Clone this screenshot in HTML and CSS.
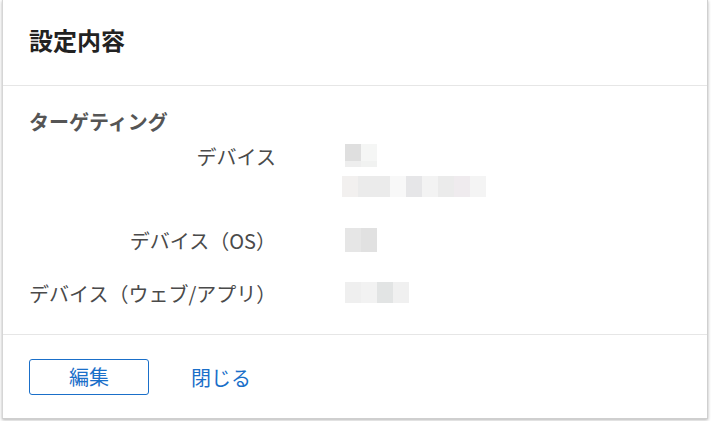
FILE: index.html
```html
<!DOCTYPE html>
<html lang="ja">
<head>
<meta charset="utf-8">
<link rel="stylesheet" href="styles.css">
</head>
<body>
<div class="page">
  <div class="dialog">
    <div class="dlg-header"><h1 class="dlg-title">設定内容</h1></div>
    <div class="dlg-body">
      <h2 class="section-title">ターゲティング</h2>
      <div class="settings">
        <div class="label">デバイス</div>
        <div class="value">
          <div class="line"><span class="blk b1"><i class="c1"></i><i class="c2"></i></span></div>
          <div class="line"><span class="blk b2"><i class="d1"></i><i class="d2 w2"></i><i class="d3"></i><i class="d4"></i><i class="d5"></i><i class="d6"></i><i class="d7"></i><i class="d8"></i></span></div>
        </div>
        <div class="label">デバイス（OS）</div>
        <div class="value">
          <div class="line"><span class="blk b3"><i class="e1"></i><i class="e2"></i></span></div>
        </div>
        <div class="label">デバイス（ウェブ/アプリ）</div>
        <div class="value">
          <div class="line"><span class="blk b4"><i class="f1"></i><i class="f2"></i><i class="f3"></i><i class="f4"></i></span></div>
        </div>
      </div>
    </div>
    <div class="dlg-footer">
      <button class="btn-edit" type="button">編集</button>
      <a class="link-close" href="#">閉じる</a>
    </div>
  </div>
</div>
</body>
</html>
```

FILE: styles.css
```css
html, body {
  margin: 0;
  padding: 0;
  background: #ffffff;
}
body {
  font-family: "Noto Sans CJK JP", "Noto Sans", sans-serif;
  color: #444;
  width: 712px;
  height: 421px;
  overflow: hidden;
}
.page {
  padding-left: 2px;
}
.dialog {
  width: 706px;
  height: 419px;
  box-sizing: border-box;
  background: #fff;
  border-left: 1px solid #d6d6d6;
  border-right: 1px solid #d0d0d0;
  border-bottom: 1px solid #cfcfcf;
  box-shadow: 0 1px 3px rgba(0,0,0,0.3);
  display: flex;
  flex-direction: column;
}
.dlg-header {
  height: 86px;
  border-bottom: 1px solid #e6e6e6;
  box-sizing: border-box;
  display: flex;
  align-items: center;
  padding: 0 0 5px 26px;
}
.dlg-title {
  margin: 0;
  font-size: 24px;
  line-height: 30px;
  font-weight: bold;
  color: #222;
}
.dlg-body {
  padding: 23px 0 26px 26px;
  border-bottom: 1px solid #e6e6e6;
}
.section-title {
  margin: 0 0 5px;
  font-size: 20px;
  line-height: 26px;
  font-weight: bold;
  color: #555;
}
.settings {
  display: grid;
  grid-template-columns: 247px 1fr;
  column-gap: 69px;
  row-gap: 22px;
}
.label {
  text-align: right;
  font-size: 20px;
  line-height: 28px;
  padding-top: 3px;
  color: #4a4a4a;
  white-space: nowrap;
}
.value {
  display: flex;
  flex-direction: column;
}
.line {
  height: 31px;
  display: flex;
  align-items: center;
}
.blk {
  display: flex;
}
.blk i {
  display: block;
  width: 16px;
}
.blk i.w2 { width: 32px; }
.b1 { height: 23px; margin-left: 0; }
.b1 i.c1 { background: linear-gradient(#dfdfdf 0 74%, #eeeeee 74%); }
.b1 i.c2 { background: linear-gradient(#f5f6f5 0 74%, #f1f2f1 74%); }
.b2 { height: 21px; margin-left: -3px; }
.b2 .d1 { background: #f2f0ef; }
.b2 .d2 { background: #ebebeb; }
.b2 .d3 { background: #f8f8f8; }
.b2 .d4 { background: #e6e6e8; }
.b2 .d5 { background: #f3f3f3; }
.b2 .d6 { background: #ebebeb; }
.b2 .d7 { background: #efebee; }
.b2 .d8 { background: #f4f4f4; }
.b3 { height: 24px; }
.b3 .e1 { background: #e6e6e6; }
.b3 .e2 { background: #e1e1e1; }
.b4 { height: 21px; }
.b4 .f1 { background: #efefef; }
.b4 .f2 { background: #f2f2f2; }
.b4 .f3 { background: #e2e4e4; }
.b4 .f4 { background: #f0f0f0; }
.dlg-footer {
  display: flex;
  align-items: center;
  gap: 42px;
  padding: 24px 0 0 26px;
}
.btn-edit {
  width: 120px;
  height: 36px;
  border: 1px solid #1a6fc9;
  border-radius: 3px;
  background: #fff;
  color: #1a6fc9;
  font-family: inherit;
  font-size: 20px;
  line-height: 1;
  padding: 0;
  cursor: pointer;
}
.link-close {
  color: #1a6fc9;
  font-size: 20px;
  text-decoration: none;
}
```
